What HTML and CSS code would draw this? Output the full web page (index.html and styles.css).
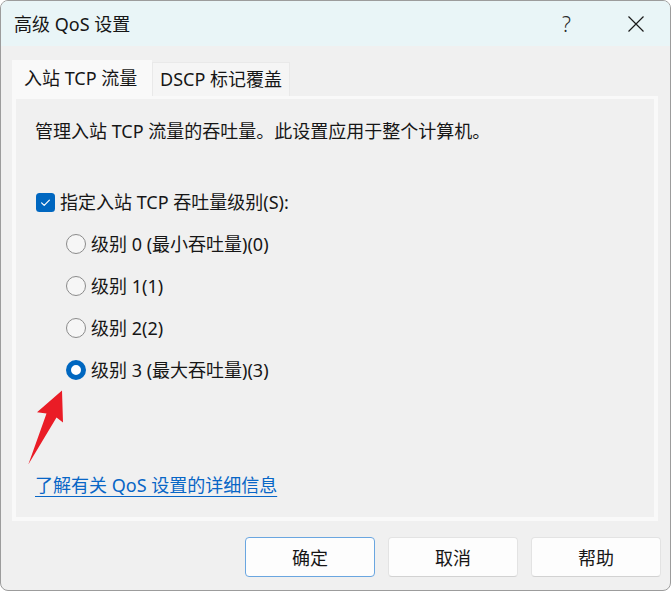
FILE: index.html
```html
<!DOCTYPE html>
<html lang="zh-CN">
<head>
<meta charset="utf-8">
<title>高级 QoS 设置</title>
<link rel="stylesheet" href="styles.css">
</head>
<body>
<div class="window">
  <div class="titlebar">
    <div class="title">高级 QoS 设置</div>
    <div class="caption-btns">
      <div class="cap-btn help">?</div>
      <div class="cap-btn close">
        <svg width="16" height="16" viewBox="0 0 16 16"><path d="M0.5 0.5 L15.5 15.5 M15.5 0.5 L0.5 15.5" stroke="#1a1a1a" stroke-width="1.2" fill="none"/></svg>
      </div>
    </div>
  </div>
  <div class="content">
    <div class="tabs">
      <div class="tab active">入站 TCP 流量</div>
      <div class="tab">DSCP 标记覆盖</div>
    </div>
    <div class="panel">
      <div class="desc">管理入站 TCP 流量的吞吐量。此设置应用于整个计算机。</div>
      <div class="check-row">
        <span class="checkbox">
          <svg width="19" height="19" viewBox="0 0 19 19"><rect x="0" y="0" width="19" height="19" rx="3.5" fill="#0067c0"/><path d="M5.6 9.9 L8.2 12.4 L13.4 7.1" stroke="#fff" stroke-width="1.2" fill="none" stroke-linecap="round" stroke-linejoin="round"/></svg>
        </span>
        <span class="label">指定入站 TCP 吞吐量级别(S):</span>
      </div>
      <div class="radios">
        <div class="radio-row"><span class="radio"></span><span class="label">级别 0 (最小吞吐量)(0)</span></div>
        <div class="radio-row"><span class="radio"></span><span class="label">级别 1(1)</span></div>
        <div class="radio-row"><span class="radio"></span><span class="label">级别 2(2)</span></div>
        <div class="radio-row"><span class="radio on"></span><span class="label">级别 3 (最大吞吐量)(3)</span></div>
      </div>
      <a class="link" href="#">了解有关 QoS 设置的详细信息</a>
    </div>
    <div class="buttons">
      <div class="btn default">确定</div>
      <div class="btn">取消</div>
      <div class="btn">帮助</div>
    </div>
  </div>
  <svg class="arrow" width="671" height="591" viewBox="0 0 671 591">
    <polygon points="62,390.5 37,412.3 46.5,413.5 28.3,464.5 56.5,417.5 63,422.5" fill="#ea1c26"/>
  </svg>
</div>
</body>
</html>
```
FILE: styles.css
```css
html, body {
  margin: 0;
  padding: 0;
  background: #ffffff;
}
body {
  font-family: "Noto Sans", "Noto Sans CJK SC", sans-serif;
  font-size: 18px;
  color: #161616;
}
.window {
  position: relative;
  width: 671px;
  height: 591px;
  box-sizing: border-box;
  border: 1px solid #9c9c9c;
  border-radius: 8px;
  background: #f0f0f0;
  overflow: hidden;
  display: flex;
  flex-direction: column;
}
.titlebar {
  height: 45px;
  background: #e9f5f7;
  display: flex;
  align-items: center;
  justify-content: space-between;
  padding-left: 13px;
  flex: none;
}
.title {
  font-size: 18px;
  line-height: 24px;
  color: #161616;
}
.caption-btns {
  display: flex;
  height: 100%;
}
.cap-btn {
  width: 69px;
  height: 100%;
  display: flex;
  align-items: center;
  justify-content: center;
}
.help {
  font-size: 21px;
  color: #2a2a2a;
  font-family: "Noto Sans", sans-serif;
  font-weight: 300;
}
.content {
  flex: 1;
  display: flex;
  flex-direction: column;
  padding: 14px 12px 0 11px;
}
.tabs {
  display: flex;
  align-items: flex-end;
  height: 36px;
}
.tab {
  box-sizing: border-box;
  height: 34px;
  line-height: 32px;
  padding: 0 7px 0 7px;
  width: 138px;
  background: #f5f5f5;
  border: 1px solid #e9e9e9;
  border-bottom: none;
  white-space: nowrap;
}
.tab.active {
  width: 140px;
  height: 36px;
  line-height: 36px;
  padding-left: 12px;
  background: #f9f9f9;
  border: none;
}
.panel {
  position: relative;
  box-sizing: border-box;
  height: 425px;
  border: 4px solid #f9f9f9;
  border-top-width: 3px;
  background: #f0f0f0;
  display: flex;
  flex-direction: column;
  padding: 20px 0 20px 19px;
}
.desc {
  line-height: 24px;
  white-space: nowrap;
}
.check-row {
  margin-top: 47px;
  display: flex;
  align-items: center;
  height: 24px;
}
.checkbox {
  width: 19px;
  height: 19px;
  margin-left: 1px;
  margin-right: 5px;
  display: flex;
}
.label {
  line-height: 24px;
  white-space: nowrap;
}
.radios {
  margin-top: 9px;
  padding-left: 31px;
  display: flex;
  flex-direction: column;
}
.radio-row {
  height: 42px;
  display: flex;
  align-items: center;
}
.radio {
  box-sizing: border-box;
  width: 20px;
  height: 20px;
  border-radius: 50%;
  border: 1px solid #8b8b8b;
  background: #f6f6f6;
  margin-right: 5px;
  flex: none;
}
.radio.on {
  border: 5.5px solid #0067c0;
  background: #ffffff;
}
.link {
  margin-top: auto;
  color: #0866c6;
  text-decoration: underline;
  text-underline-offset: 4px;
  text-decoration-thickness: 1px;
  line-height: 24px;
  align-self: flex-start;
  white-space: nowrap;
}
.buttons {
  display: flex;
  justify-content: flex-end;
  gap: 13px;
  margin-top: 16px;
  margin-right: -3px;
}
.btn {
  box-sizing: border-box;
  width: 130px;
  height: 40px;
  background: #fdfdfd;
  border: 1px solid #e3e3e3;
  border-bottom-color: #d2d2d2;
  border-radius: 4px;
  display: flex;
  align-items: center;
  justify-content: center;
  color: #161616;
}
.btn.default {
  border: 1px solid #6aa6e0;
}
.arrow {
  position: absolute;
  left: -1px;
  top: -1px;
  pointer-events: none;
}
```
